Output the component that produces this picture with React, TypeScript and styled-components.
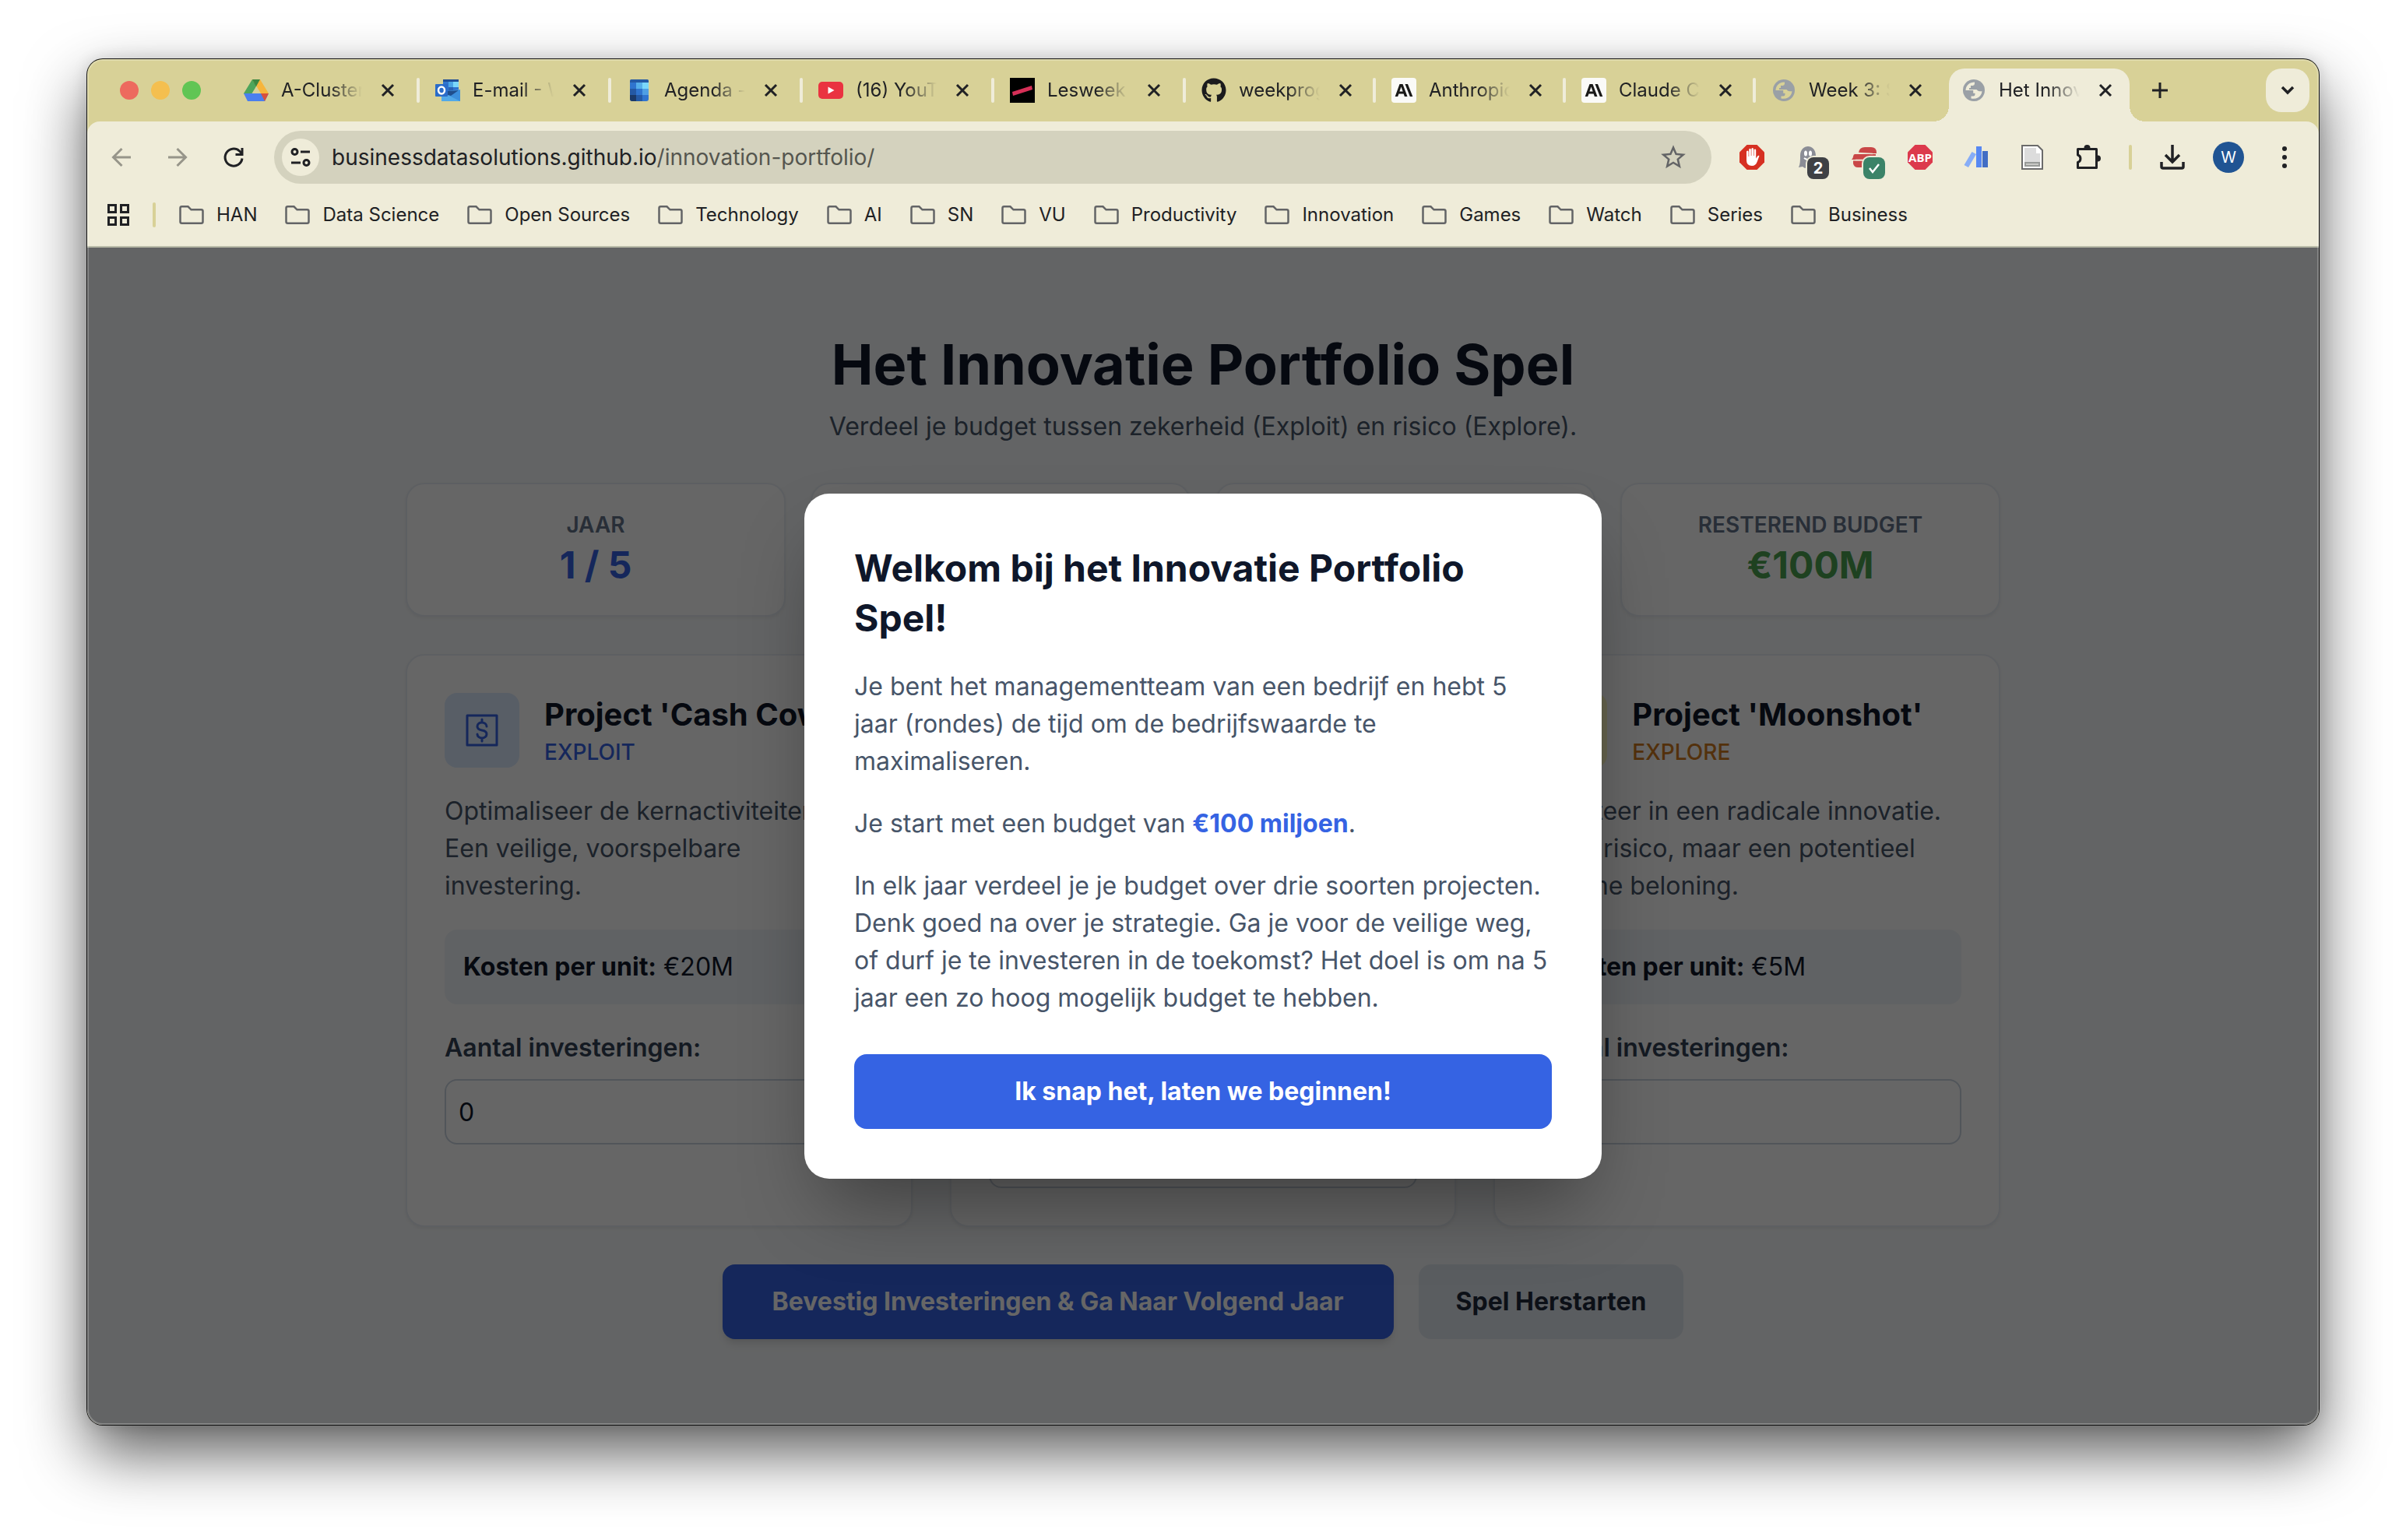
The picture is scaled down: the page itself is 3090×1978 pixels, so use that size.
import React from 'react';
import styled, { createGlobalStyle, css } from 'styled-components';
import { FaGithub } from 'react-icons/fa';
import { MdStarBorder } from 'react-icons/md';

const Global = createGlobalStyle`
  * { box-sizing: border-box; }
  body { margin: 0; background: #fff; font-family: Inter, "Liberation Sans", sans-serif; }
  button, input { font: inherit; }
  h1, h2, h3, p { margin: 0; }
`;

const Desktop = styled.div`
  min-height: 100vh;
  padding: 76px 112px 148px;
  display: flex;
  flex-direction: column;
`;

const BrowserWindow = styled.main`
  flex: 1;
  display: flex;
  flex-direction: column;
  position: relative;
  border-radius: 20px;
  overflow: hidden;
  background: #d8d197;
  box-shadow: 0 0 0 1px rgba(0, 0, 0, 0.9), 0 36px 80px rgba(0, 0, 0, 0.64), 0 0 20px rgba(0, 0, 0, 0.14);
  &::after {
    content: '';
    position: absolute;
    inset: 0;
    border-radius: 20px;
    box-shadow: inset 0 0 0 2px rgba(255, 255, 255, 0.22);
    pointer-events: none;
  }
`;

const IconButton = styled.button<{ $color?: string }>`
  border: 0;
  padding: 0;
  background: none;
  color: ${(p) => p.$color ?? '#202124'};
  display: flex;
  align-items: center;
  justify-content: center;
`;

const TabStrip = styled.header`
  height: 80px;
  padding: 0 12px 0 42px;
  display: flex;
`;

const Lights = styled.div`
  display: flex;
  align-items: center;
  gap: 16px;
  width: 139px;
`;

const Light = styled.span<{ $color: string }>`
  width: 24px;
  height: 24px;
  border-radius: 50%;
  background: ${(p) => p.$color};
`;

const TabItem = styled.div<{ $active?: boolean; $last?: boolean; $wide?: boolean }>`
  width: ${(p) => (p.$wide ? 246 : 244)}px;
  display: flex;
  align-items: center;
  padding-left: 20px;
  position: relative;
  ${(p) =>
    p.$active
      ? css`
          width: 232px;
          height: 68px;
          margin: 12px 6px 0 4px;
          padding: 0 16px 12px;
          background: #efecd9;
          border-radius: 20px 20px 0 0;
          &::before, &::after {
            content: '';
            position: absolute;
            bottom: 0;
            width: 20px;
            height: 20px;
          }
          &::before { left: -20px; background: radial-gradient(circle at 0 0, #d8d197 20px, #efecd9 20px); }
          &::after { right: -20px; background: radial-gradient(circle at 100% 0, #d8d197 20px, #efecd9 20px); }
        `
      : !p.$last &&
        css`
          &::after {
            content: '';
            width: 4px;
            height: 32px;
            border-radius: 2px;
            background: #efecd9;
            margin-left: auto;
          }
        `}
`;

const Favicon = styled.span`
  width: 32px;
  height: 32px;
  display: flex;
  align-items: center;
  justify-content: center;
  flex: none;
`;

const TabTitle = styled.span`
  width: 104px;
  margin: 0 24px 0 16px;
  overflow: hidden;
  white-space: nowrap;
  font-size: 24px;
  line-height: 32px;
  color: #202124;
  mask-image: linear-gradient(90deg, #000 60%, transparent 100%);
`;

const NewTab = styled(IconButton)`
  width: 66px;
`;

const TabSearch = styled(IconButton)`
  width: 56px;
  height: 56px;
  margin: 12px 0 0 auto;
  border-radius: 20px;
  background: #efecd9;
`;

const Chrome = styled.div`
  background: #efecd9;
  border-radius: 16px 16px 0 0;
  border-bottom: 2px solid #b9bba8;
  padding-bottom: 12px;
`;

const Toolbar = styled.div`
  height: 92px;
  padding: 0 8px;
  display: flex;
  align-items: center;
`;

const ToolButton = styled(IconButton)`
  width: 72px;
  height: 72px;
  position: relative;
`;

const Omnibox = styled.div`
  flex: 1;
  height: 68px;
  margin: 0 16px;
  padding: 0 30px 0 10px;
  border-radius: 34px;
  background: #d4d2be;
  display: flex;
  align-items: center;
`;

const SiteInfo = styled(IconButton)`
  width: 48px;
  height: 48px;
  border-radius: 50%;
  background: #efecd9;
`;

const Url = styled.div`
  flex: 1;
  padding-left: 16px;
  font-size: 28px;
  line-height: 40px;
  color: #55564f;
  b { font-weight: 400; color: #202124; }
`;

const Divider = styled.span`
  width: 4px;
  height: 32px;
  border-radius: 2px;
  background: #d8d197;
  margin: 0 16px;
`;

const CountBadge = styled.span<{ $color: string }>`
  position: absolute;
  left: 35px;
  top: 36px;
  width: 28px;
  height: 28px;
  border-radius: 8px;
  background: ${(p) => p.$color};
  box-shadow: 0 0 0 2px #efecd9;
  color: #fff;
  font-size: 20px;
  font-weight: 700;
  display: flex;
  align-items: center;
  justify-content: center;
`;

const Avatar = styled.span`
  width: 40px;
  height: 40px;
  border-radius: 50%;
  background: #205493;
  color: #fff;
  font-size: 20px;
  line-height: 40px;
`;

const Bookmarks = styled.nav`
  height: 56px;
  padding-left: 26px;
  display: flex;
  align-items: center;
  gap: 30px;
`;

const BookmarkDivider = styled(Divider)`
  margin: 0;
`;

const BookmarkList = styled.div`
  display: flex;
  gap: 36px;
`;

const Bookmark = styled.a`
  display: flex;
  align-items: center;
  gap: 16px;
  font-size: 24px;
  line-height: 32px;
  color: #202124;
  text-decoration: none;
  white-space: nowrap;
`;

const Viewport = styled.div`
  flex: 1;
  position: relative;
  background: #f8fafc;
  display: flex;
  justify-content: center;
  align-items: center;
  padding: 64px;
  color: #0f172a;
`;

const Game = styled.div`
  width: 100%;
  max-width: 2048px;
  font-size: 32px;
  line-height: 48px;
`;

const GameHeader = styled.div`
  text-align: center;
  margin-bottom: 48px;
  h1 { font-size: 72px; line-height: 80px; font-weight: 700; }
  p { margin-top: 16px; color: #475569; }
`;

const Stats = styled.section`
  display: grid;
  grid-template-columns: repeat(4, 1fr);
  gap: 32px;
  margin-bottom: 48px;
`;

const Card = styled.div`
  background: #fff;
  border: 2px solid #e9eef4;
  border-radius: 24px;
  box-shadow: 0 2px 4px rgba(0, 0, 0, 0.06);
`;

const Stat = styled(Card)`
  padding: 32px;
  text-align: center;
`;

const StatLabel = styled.div`
  font-size: 28px;
  line-height: 40px;
  font-weight: 600;
  color: #64748b;
`;

const StatValue = styled.div<{ $color: string }>`
  font-size: 48px;
  line-height: 64px;
  font-weight: 700;
  color: ${(p) => p.$color};
`;

const Projects = styled.section`
  display: grid;
  grid-template-columns: repeat(3, 1fr);
  gap: 48px;
  margin-bottom: 48px;
`;

const ProjectCard = styled(Card)`
  padding: 48px;
`;

const ProjectHead = styled.div`
  display: flex;
  align-items: center;
  gap: 32px;
  margin-bottom: 32px;
  h3 { font-size: 40px; line-height: 56px; font-weight: 700; }
`;

const ProjectIcon = styled.div<{ $bg: string; $color: string }>`
  flex: none;
  width: 96px;
  height: 96px;
  border-radius: 16px;
  background: ${(p) => p.$bg};
  color: ${(p) => p.$color};
  display: flex;
  align-items: center;
  justify-content: center;
`;

const Kind = styled.div<{ $color: string }>`
  font-size: 28px;
  line-height: 40px;
  font-weight: 500;
  color: ${(p) => p.$color};
`;

const Description = styled.p`
  color: #475569;
  margin-bottom: 32px;
`;

const Cost = styled.div`
  padding: 24px;
  border-radius: 16px;
  background: #f1f5f9;
  margin-bottom: 32px;
`;

const FieldLabel = styled.label`
  display: block;
  font-weight: 600;
  color: #334155;
  margin-bottom: 16px;
`;

const NumberField = styled.input`
  display: block;
  width: 100%;
  height: 84px;
  padding: 16px;
  border: 2px solid #cbd5e1;
  border-radius: 16px;
  background: #fff;
  color: #0f172a;
`;

const Actions = styled.div`
  display: flex;
  justify-content: center;
  gap: 32px;
`;

const Button = styled.button<{ $primary?: boolean; $wide?: boolean }>`
  border: 0;
  border-radius: 16px;
  padding: 24px ${(p) => (p.$primary ? 64 : 48)}px;
  line-height: 48px;
  font-weight: 700;
  background: ${(p) => (p.$primary ? '#3563e3' : '#e2e8f0')};
  color: ${(p) => (p.$primary ? '#fff' : '#1e293b')};
  width: ${(p) => (p.$wide ? '100%' : 'auto')};
  box-shadow: ${(p) => (p.$primary && !p.$wide ? '0 8px 12px -2px rgba(0,0,0,.1), 0 4px 8px -4px rgba(0,0,0,.1)' : 'none')};
`;

const Overlay = styled.div`
  position: absolute;
  inset: 0;
  background: rgba(0, 0, 0, 0.6);
  display: flex;
  align-items: center;
  justify-content: center;
`;

const Modal = styled.div`
  width: 100%;
  max-width: 1024px;
  padding: 64px;
  border-radius: 32px;
  background: #fff;
  box-shadow: 0 50px 100px -24px rgba(0, 0, 0, 0.4);
  font-size: 32px;
  line-height: 48px;
  h2 { font-size: 48px; line-height: 64px; font-weight: 700; margin-bottom: 32px; }
  p { color: #475569; margin-bottom: 32px; }
  p:last-of-type { margin-bottom: 48px; }
  strong { color: #3563e3; }
`;

const DriveIcon = () => (
  <svg width="32" height="28" viewBox="0 0 32 28">
    <path d="M11 0h10l-5 9-7 19-9-10z" fill="#4ea55b" />
    <path d="M11 0h10l-5 9z" fill="#3b8741" />
    <path d="M21 0l11 18H22L11 0z" fill="#f6b53c" />
    <path d="M11 0h10l-5 9z" fill="#3b8741" />
    <path d="M16 9l-5.500 9h11z" fill="#d8d197" />
    <path d="M0 18h32l-5 10H5z" fill="#4a7fee" />
    <path d="M22 18h10l-5 10z" fill="#d8503c" />
  </svg>
);

const OutlookIcon = () => (
  <svg width="32" height="28" viewBox="0 0 32 28">
    <path d="M10 0h20v16H10z" fill="#2f74cf" />
    <path d="M10 0h20v3H10z" fill="#1f4e96" />
    <path d="M23 3h7v7h-7z" fill="#7ad7fb" />
    <path d="M17 3h6v7h-6z" fill="#4ba5e6" />
    <path d="M17 10h6v6h-6z" fill="#2961b4" />
    <path d="M8 16l24-3v15H8z" fill="#52a9e8" />
    <path d="M32 13L18 21l14 7z" fill="#3c8fdc" />
    <path d="M16 15v5l4 1 10-7z" fill="#1f4e8d" />
    <rect y="6" width="16" height="16" rx="1" fill="#2a6cc9" />
    <ellipse cx="8" cy="14" rx="4" ry="4.500" fill="none" stroke="#fff" strokeWidth="2.500" />
  </svg>
);

const CalendarIcon = () => (
  <svg width="24" height="28" viewBox="0 0 24 28">
    <rect width="24" height="28" rx="3" fill="#2f74cf" />
    <path d="M0 4V2q0-2 2-2h20q2 0 2 2v2z" fill="#2459a5" />
    <path d="M8 4h8v8H8z" fill="#55aeea" />
    <path d="M16 4h8v8h-8z" fill="#7ad7fb" />
    <path d="M0 12h8v8H0z" fill="#2459a5" />
    <path d="M16 12h8v8h-8z" fill="#4f9fe4" />
    <path d="M0 20h8v8H3q-3 0-3-3z" fill="#1b3a69" />
    <path d="M8 20h8v8H8z" fill="#2459a5" />
  </svg>
);

const YouTubeIcon = () => (
  <svg width="32" height="22" viewBox="0 0 32 22">
    <rect width="32" height="22" rx="5" fill="#ea3340" />
    <path d="M12.500 6.500v9l8-4.500z" fill="#fff" />
  </svg>
);

const LesweekIcon = () => (
  <svg width="32" height="32" viewBox="0 0 32 32">
    <path d="M0 0h32v32H0z" />
    <path d="M3 18l25-8 1 5-25 8z" fill="#d62f57" />
  </svg>
);

const AnthropicIcon = () => (
  <svg width="32" height="32" viewBox="0 0 32 32">
    <rect width="32" height="32" rx="4" fill="#fafaf7" />
    <path d="M10.500 8h4l6 16h-3.600l-1.200-3.400H9.400L8.200 24H4.700zM10.400 17.500h4.300l-2.200-6z" fill="#1a1a18" fillRule="evenodd" />
    <path d="M17.500 8H21l6.300 16h-3.500z" fill="#1a1a18" />
  </svg>
);

const GlobeIcon = ({ land }: { land: string }) => (
  <svg width="28" height="28" viewBox="0 0 28 28">
    <circle cx="14" cy="14" r="14" fill="#9aa0a6" />
    <path d="M3.500 13.500q.3-5.500 5-8.500 3-1.700 6.500-1.600v2.200q0 2.400-2.400 2.400H10v3H8v2h8.500v2.400L15 14H3.500z" fill={land} />
    <path d="M15 13h2.500q1.500 2.200 4 2.200h3q-.6 5.300-5 8-4 2.200-9 1.200v-3h2.800q2.200 0 2.200-2.200v-1.400h-2.300V14z" fill={land} />
  </svg>
);

const CloseIcon = () => (
  <svg width="18" height="18" viewBox="0 0 18 18" stroke="#202124" strokeWidth="3">
    <path d="M2 2l14 14M16 2L2 16" />
  </svg>
);

const ArrowIcon = ({ back }: { back?: boolean }) => (
  <svg width="26" height="26" viewBox="0 0 26 26" fill="none" stroke="#97958a" strokeWidth="3">
    <path d={back ? 'M25 13H3M13.500 2L2.500 13l11 11' : 'M1 13h22M12.500 2l11 11-11 11'} />
  </svg>
);

const ReloadIcon = () => (
  <svg width="28" height="28" viewBox="0 0 28 28" fill="none" stroke="#202124" strokeWidth="3">
    <path d="M25 15.500A11 11 0 1 1 21.500 6L25 9.500" />
    <path d="M25 2v8.500h-8.500" />
  </svg>
);

const TuneIcon = () => (
  <svg width="26" height="26" viewBox="0 0 26 26" fill="none" stroke="#202124" strokeWidth="3">
    <circle cx="5.500" cy="6" r="3.500" />
    <path d="M13 6h12M1 20h12" />
    <circle cx="20.500" cy="20" r="3.500" />
  </svg>
);

const HandIcon = () => (
  <svg width="32" height="32" viewBox="0 0 32 32">
    <path d="M9.500 0h13L32 9.500v13L22.500 32h-13L0 22.500v-13z" fill="#d63022" />
    <path d="M9 9q0-1.500 1.300-1.500T11.600 9v6h.6V6.300q0-1.500 1.300-1.500t1.300 1.500V14h.6V5.500Q15.400 4 16.700 4T18 5.500V14h.6V7q0-1.400 1.300-1.400T21.200 7v10.500l2-3q1.200-1.500 2.300-.4L23 21q-2 6-7 6-7 0-7-7z" fill="#fff" />
  </svg>
);

const GhostIcon = () => (
  <svg width="28" height="28" viewBox="0 0 28 28">
    <path d="M2 27c2-4 2-9 2-15C4 4 9 0 14 0s10 4 10 12c0 6 1 11 3 14l-6-1-3 3-4-2-4 2-3-2z" fill="#8b8d96" />
    <ellipse cx="11" cy="9" rx="2" ry="3.500" fill="#fff" />
    <ellipse cx="17" cy="9" rx="2" ry="3.500" fill="#fff" />
    <path d="M9 15q5 4 10 0" stroke="#fff" strokeWidth="2" fill="none" />
  </svg>
);

const RedCapIcon = () => (
  <svg width="32" height="28" viewBox="0 0 32 28">
    <path d="M9 8q1-7 8-7h8q7 0 7 7v1H9z" fill="#c94747" />
    <path d="M4 10h27v7H0q2-2 2-4 .5-3 2-3z" fill="#c94747" />
    <path d="M2 18.500h16V27H8q-5 0-6-5z" fill="#c94747" />
    <path d="M8 8.500l19 1" stroke="#efecd9" strokeWidth="1.500" />
    <path d="M5 17.500h16" stroke="#efecd9" strokeWidth="1.500" />
  </svg>
);

const AbpIcon = () => (
  <svg width="32" height="32" viewBox="0 0 32 32">
    <path d="M9.500 0h13L32 9.500v13L22.500 32h-13L0 22.500v-13z" fill="#dc394c" />
    <text x="16" y="21.500" textAnchor="middle" fontSize="15" fontWeight="700" fill="#fff" fontFamily="Open Sans, sans-serif">ABP</text>
  </svg>
);

const BarsIcon = () => (
  <svg width="32" height="28" viewBox="0 0 32 28">
    <path d="M10.500 7l5.500 3L6 27l-5.500-3z" fill="#87adf7" />
    <path d="M16 0h7v27h-7z" fill="#5788f2" />
    <path d="M24 6h7v21h-7z" fill="#416dc4" />
  </svg>
);

const PageIcon = () => (
  <svg width="28" height="32" viewBox="0 0 28 32">
    <path d="M1 1h20l6 6v24H1z" fill="#fff" stroke="#6b6b6b" strokeWidth="2" />
    <path d="M4 4h15v7h5v17H4z" fill="#dcdcdc" />
    <path d="M5 23h18v4H5z" fill="#c8c9c6" stroke="#989a98" strokeWidth="2" />
  </svg>
);

const PuzzleIcon = () => (
  <svg width="34" height="34" viewBox="0 0 34 34">
    <path d="M3.500 6.500h24v24h-24v-7a5 5 0 0 0 0-9.500z" fill="none" stroke="#202124" strokeWidth="3" strokeLinejoin="round" />
    <path d="M11.500 5a4 4 0 0 1 8 0zM29 14.500a4 4 0 0 1 0 8z" fill="#202124" />
  </svg>
);

const DownloadIcon = () => (
  <svg width="32" height="32" viewBox="0 0 32 32" fill="none" stroke="#202124" strokeWidth="3.500">
    <path d="M16 0v21M7 13l9 9 9-9M2 22v6q0 2 2 2h24q2 0 2-2v-6" />
  </svg>
);

const DotsIcon = () => (
  <svg width="8" height="28" viewBox="0 0 8 28" fill="#202124">
    <circle cx="4" cy="3" r="3" />
    <circle cx="4" cy="14" r="3" />
    <circle cx="4" cy="25" r="3" />
  </svg>
);

const AppsIcon = () => (
  <svg width="28" height="28" viewBox="0 0 28 28" fill="none" stroke="#202124" strokeWidth="3">
    <path d="M1.500 1.500h9v9h-9zM17.500 1.500h9v9h-9zM1.500 17.500h9v9h-9zM17.500 17.500h9v9h-9z" />
  </svg>
);

const FolderIcon = () => (
  <svg width="32" height="24" viewBox="0 0 32 24" fill="none" stroke="#636466" strokeWidth="2.500">
    <path d="M3.500 1.300h8l4 4h13q2 0 2 2v13.400q0 2-2 2h-25q-2 0-2-2V3.300q0-2 2-2z" />
  </svg>
);

const CashIcon = () => (
  <svg width="42" height="42" viewBox="0 0 42 42" fill="none" stroke="currentColor" strokeWidth="3" strokeLinecap="round" strokeLinejoin="round">
    <path d="M2 2h38v38H2z" />
    <path d="M21 7v4M21 31v4M27 16c0-3-3-5-6-5s-6 1.500-6 5 3 4.500 6 5 6 2 6 5-3 5-6 5-6-2-6-5" />
  </svg>
);

const ChartIcon = () => (
  <svg width="42" height="42" viewBox="0 0 42 42" fill="none" stroke="currentColor" strokeWidth="3">
    <path d="M2 32l12-12 8 8L40 8M28 8h12v12" />
  </svg>
);

const tabs = [
  { title: 'A-Cluster', icon: <DriveIcon /> },
  { title: 'E-mail - W', icon: <OutlookIcon /> },
  { title: 'Agenda - ', icon: <CalendarIcon /> },
  { title: '(16) YouTube', icon: <YouTubeIcon /> },
  { title: 'Lesweek', icon: <LesweekIcon /> },
  { title: 'weekprogramma', icon: <FaGithub size={32} color="#1b1b1d" /> },
  { title: 'Anthropic', icon: <AnthropicIcon /> },
  { title: 'Claude Code', icon: <AnthropicIcon /> },
  { title: 'Week 3: S', icon: <GlobeIcon land="#d8d197" /> },
  { title: 'Het Innovatie', icon: <GlobeIcon land="#efecd9" /> },
];

const folders = ['HAN', 'Data Science', 'Open Sources', 'Technology', 'AI', 'SN', 'VU', 'Productivity', 'Innovation', 'Games', 'Watch', 'Series', 'Business'];

const stats = [
  { label: 'JAAR', value: '1 / 5', color: '#3563e3' },
  { label: 'BEDRIJFSWAARDE', value: '€100M', color: '#0f172a' },
  { label: 'BUDGET', value: '€100M', color: '#0f172a' },
  { label: 'RESTEREND BUDGET', value: '€100M', color: '#4ba351' },
];

const projects = [
  {
    id: 'cash', name: "Project 'Cash Cow'", kind: 'EXPLOIT', color: '#3563e3', bg: '#dbeafe', icon: <CashIcon />,
    text: 'Optimaliseer de kernactiviteiten. Een veilige, voorspelbare investering.', cost: '€20M',
  },
  {
    id: 'growth', name: "Project 'Nieuwe Groeimarkt'", kind: 'EXPLORE', color: '#4ba351', bg: '#dcfce7', icon: <ChartIcon />,
    text: 'Betreed een nieuwe markt. Meer risico, maar ook een hogere opbrengst.', cost: '€10M',
  },
  {
    id: 'moonshot', name: "Project 'Moonshot'", kind: 'EXPLORE', color: '#d07a1e', bg: '#fef9c3', icon: <ChartIcon />,
    text: 'Investeer in een radicale innovatie. Hoog risico, maar een potentieel enorme beloning.', cost: '€5M',
  },
];

export default function App() {
  return (
    <Desktop>
      <Global />
      <BrowserWindow>
        <TabStrip>
          <Lights>
            <Light $color="#ed6a5e" />
            <Light $color="#f4bf4f" />
            <Light $color="#61c554" />
          </Lights>
          {tabs.map((tab, i) => (
            <TabItem key={tab.title} $active={i === 9} $last={i === 8} $wide={i < 5}>
              <Favicon>{tab.icon}</Favicon>
              <TabTitle>{tab.title}</TabTitle>
              <IconButton aria-label="Tabblad sluiten"><CloseIcon /></IconButton>
            </TabItem>
          ))}
          <NewTab aria-label="Nieuw tabblad">
            <svg width="20" height="20" viewBox="0 0 20 20" stroke="#202124" strokeWidth="3"><path d="M10 0v20M0 10h20" /></svg>
          </NewTab>
          <TabSearch aria-label="Tabbladen zoeken">
            <svg width="18" height="12" viewBox="0 0 18 12" fill="none" stroke="#202124" strokeWidth="3.500"><path d="M2 2l7 7 7-7" /></svg>
          </TabSearch>
        </TabStrip>
        <Chrome>
          <Toolbar>
            <ToolButton aria-label="Vorige"><ArrowIcon back /></ToolButton>
            <ToolButton aria-label="Volgende"><ArrowIcon /></ToolButton>
            <ToolButton aria-label="Vernieuwen"><ReloadIcon /></ToolButton>
            <Omnibox>
              <SiteInfo aria-label="Sitegegevens"><TuneIcon /></SiteInfo>
              <Url><b>businessdatasolutions.github.io</b>/innovation-portfolio/</Url>
              <IconButton aria-label="Bookmark" $color="#636466"><MdStarBorder size={38} /></IconButton>
            </Omnibox>
            <ToolButton aria-label="AdBlock"><HandIcon /></ToolButton>
            <ToolButton aria-label="Ghostery"><GhostIcon /><CountBadge $color="#3f4145">2</CountBadge></ToolButton>
            <ToolButton aria-label="Privacy">
              <RedCapIcon />
              <CountBadge $color="#3b8368">
                <svg width="16" height="14" viewBox="0 0 16 14" fill="none" stroke="#fff" strokeWidth="2.500"><path d="M2 7l4 5 8-10" /></svg>
              </CountBadge>
            </ToolButton>
            <ToolButton aria-label="Adblock Plus"><AbpIcon /></ToolButton>
            <ToolButton aria-label="Statistieken"><BarsIcon /></ToolButton>
            <ToolButton aria-label="Lezer"><PageIcon /></ToolButton>
            <ToolButton aria-label="Extensies"><PuzzleIcon /></ToolButton>
            <Divider />
            <ToolButton aria-label="Downloads"><DownloadIcon /></ToolButton>
            <ToolButton aria-label="Profiel"><Avatar>W</Avatar></ToolButton>
            <ToolButton aria-label="Menu"><DotsIcon /></ToolButton>
          </Toolbar>
          <Bookmarks>
            <IconButton aria-label="Apps"><AppsIcon /></IconButton>
            <BookmarkDivider />
            <BookmarkList>
              {folders.map((name) => (
                <Bookmark key={name} href="#"><FolderIcon />{name}</Bookmark>
              ))}
            </BookmarkList>
          </Bookmarks>
        </Chrome>
        <Viewport>
          <Game>
            <GameHeader>
              <h1>Het Innovatie Portfolio Spel</h1>
              <p>Verdeel je budget tussen zekerheid (Exploit) en risico (Explore).</p>
            </GameHeader>
            <Stats>
              {stats.map((s) => (
                <Stat key={s.label}>
                  <StatLabel>{s.label}</StatLabel>
                  <StatValue $color={s.color}>{s.value}</StatValue>
                </Stat>
              ))}
            </Stats>
            <Projects>
              {projects.map((p) => (
                <ProjectCard key={p.id}>
                  <ProjectHead>
                    <ProjectIcon $bg={p.bg} $color={p.color}>{p.icon}</ProjectIcon>
                    <div>
                      <h3>{p.name}</h3>
                      <Kind $color={p.color}>{p.kind}</Kind>
                    </div>
                  </ProjectHead>
                  <Description>{p.text}</Description>
                  <Cost><strong>Kosten per unit:</strong> {p.cost}</Cost>
                  <FieldLabel htmlFor={p.id}>Aantal investeringen:</FieldLabel>
                  <NumberField id={p.id} type="number" defaultValue={0} />
                </ProjectCard>
              ))}
            </Projects>
            <Actions>
              <Button $primary>Bevestig Investeringen &amp; Ga Naar Volgend Jaar</Button>
              <Button>Spel Herstarten</Button>
            </Actions>
          </Game>
          <Overlay>
            <Modal role="dialog" aria-labelledby="welcome">
              <h2 id="welcome">Welkom bij het Innovatie Portfolio Spel!</h2>
              <p>Je bent het managementteam van een bedrijf en hebt 5 jaar (rondes) de tijd om de bedrijfswaarde te maximaliseren.</p>
              <p>Je start met een budget van <strong>€100 miljoen</strong>.</p>
              <p>In elk jaar verdeel je je budget over drie soorten projecten. Denk goed na over je strategie. Ga je voor de veilige weg, of durf je te investeren in de toekomst? Het doel is om na 5 jaar een zo hoog mogelijk budget te hebben.</p>
              <Button $primary $wide>Ik snap het, laten we beginnen!</Button>
            </Modal>
          </Overlay>
        </Viewport>
      </BrowserWindow>
    </Desktop>
  );
}
